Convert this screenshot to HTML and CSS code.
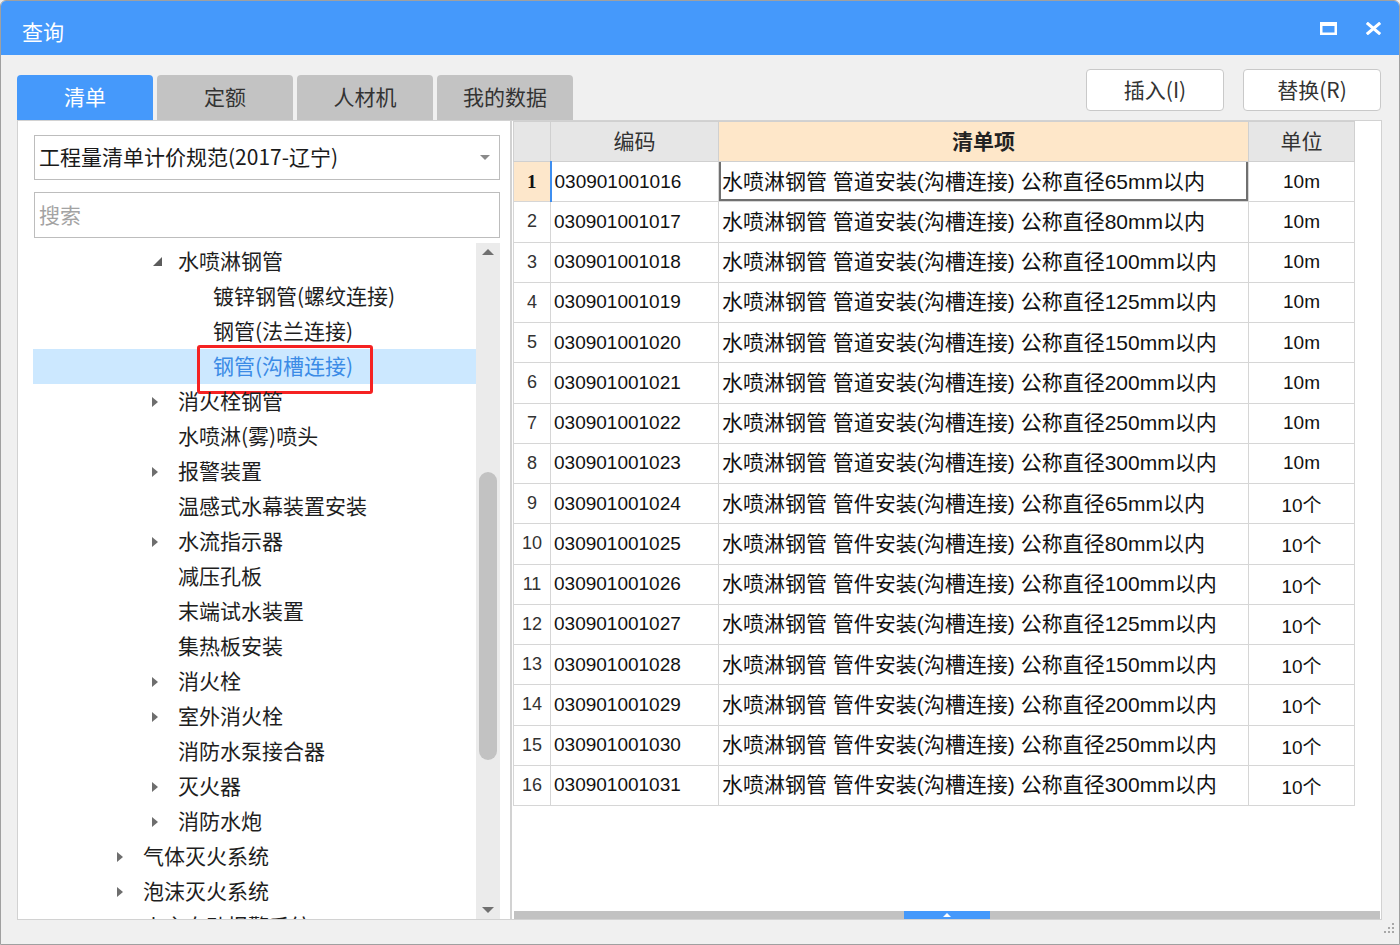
FILE: index.html
```html
<!DOCTYPE html>
<html lang="zh-CN">
<head>
<meta charset="utf-8">
<title>查询</title>
<link rel="stylesheet" href="styles.css">
</head>
<body>
<div class="window">
  <div class="titlebar">
    <div class="title">查询</div>
    <div class="win-btns">
      <svg class="ico" width="17" height="13" viewBox="0 0 17 13"><rect x="1.25" y="2" width="14.5" height="9.75" fill="none" stroke="#fff" stroke-width="2.5"/><rect x="0" y="0" width="17" height="4" fill="#fff"/></svg>
      <svg class="ico" width="17" height="13" viewBox="0 0 17 13"><path d="M1.8 0.8 L15.2 12.2 M15.2 0.8 L1.8 12.2" stroke="#fff" stroke-width="3" fill="none"/></svg>
    </div>
  </div>

  <div class="toolbar">
    <div class="tabs">
      <div class="tab active">清单</div>
      <div class="tab">定额</div>
      <div class="tab">人材机</div>
      <div class="tab">我的数据</div>
    </div>
    <div class="actions">
      <button class="btn">插入(I)</button>
      <button class="btn">替换(R)</button>
    </div>
  </div>

  <div class="main">
    <div class="left">
      <div class="select">
        <span>工程量清单计价规范(2017-辽宁)</span>
        <span class="caret"></span>
      </div>
      <div class="search">搜索</div>
      <div class="tree-area">
        <div class="tree">
          <div class="node l3"><span class="arr open"></span><span class="lbl">水喷淋钢管</span></div>
          <div class="node l4"><span class="arr none"></span><span class="lbl">镀锌钢管(螺纹连接)</span></div>
          <div class="node l4"><span class="arr none"></span><span class="lbl">钢管(法兰连接)</span></div>
          <div class="node l4 selected"><span class="arr none"></span><span class="lbl hl">钢管(沟槽连接)</span></div>
          <div class="node l3"><span class="arr closed"></span><span class="lbl">消火栓钢管</span></div>
          <div class="node l3"><span class="arr none"></span><span class="lbl">水喷淋(雾)喷头</span></div>
          <div class="node l3"><span class="arr closed"></span><span class="lbl">报警装置</span></div>
          <div class="node l3"><span class="arr none"></span><span class="lbl">温感式水幕装置安装</span></div>
          <div class="node l3"><span class="arr closed"></span><span class="lbl">水流指示器</span></div>
          <div class="node l3"><span class="arr none"></span><span class="lbl">减压孔板</span></div>
          <div class="node l3"><span class="arr none"></span><span class="lbl">末端试水装置</span></div>
          <div class="node l3"><span class="arr none"></span><span class="lbl">集热板安装</span></div>
          <div class="node l3"><span class="arr closed"></span><span class="lbl">消火栓</span></div>
          <div class="node l3"><span class="arr closed"></span><span class="lbl">室外消火栓</span></div>
          <div class="node l3"><span class="arr none"></span><span class="lbl">消防水泵接合器</span></div>
          <div class="node l3"><span class="arr closed"></span><span class="lbl">灭火器</span></div>
          <div class="node l3"><span class="arr closed"></span><span class="lbl">消防水炮</span></div>
          <div class="node l2"><span class="arr closed"></span><span class="lbl">气体灭火系统</span></div>
          <div class="node l2"><span class="arr closed"></span><span class="lbl">泡沫灭火系统</span></div>
          <div class="node l2"><span class="arr closed"></span><span class="lbl">火灾自动报警系统</span></div>
        </div>
        <div class="vscroll">
          <span class="up"></span>
          <span class="thumb"></span>
          <span class="down"></span>
        </div>
      </div>
    </div>

    <div class="right">
      <div class="grid-wrap">
        <table class="grid">
          <colgroup><col class="c-num"><col class="c-code"><col class="c-item"><col class="c-unit"></colgroup>
          <thead>
            <tr><th></th><th>编码</th><th class="hot">清单项</th><th>单位</th></tr>
          </thead>
          <tbody>
            <tr class="cur"><td class="num">1</td><td class="code">030901001016</td><td class="item sel">水喷淋钢管 管道安装(沟槽连接) 公称直径65mm以内</td><td class="unit">10m</td></tr>
            <tr><td class="num">2</td><td class="code">030901001017</td><td class="item">水喷淋钢管 管道安装(沟槽连接) 公称直径80mm以内</td><td class="unit">10m</td></tr>
            <tr><td class="num">3</td><td class="code">030901001018</td><td class="item">水喷淋钢管 管道安装(沟槽连接) 公称直径100mm以内</td><td class="unit">10m</td></tr>
            <tr><td class="num">4</td><td class="code">030901001019</td><td class="item">水喷淋钢管 管道安装(沟槽连接) 公称直径125mm以内</td><td class="unit">10m</td></tr>
            <tr><td class="num">5</td><td class="code">030901001020</td><td class="item">水喷淋钢管 管道安装(沟槽连接) 公称直径150mm以内</td><td class="unit">10m</td></tr>
            <tr><td class="num">6</td><td class="code">030901001021</td><td class="item">水喷淋钢管 管道安装(沟槽连接) 公称直径200mm以内</td><td class="unit">10m</td></tr>
            <tr><td class="num">7</td><td class="code">030901001022</td><td class="item">水喷淋钢管 管道安装(沟槽连接) 公称直径250mm以内</td><td class="unit">10m</td></tr>
            <tr><td class="num">8</td><td class="code">030901001023</td><td class="item">水喷淋钢管 管道安装(沟槽连接) 公称直径300mm以内</td><td class="unit">10m</td></tr>
            <tr><td class="num">9</td><td class="code">030901001024</td><td class="item">水喷淋钢管 管件安装(沟槽连接) 公称直径65mm以内</td><td class="unit">10个</td></tr>
            <tr><td class="num">10</td><td class="code">030901001025</td><td class="item">水喷淋钢管 管件安装(沟槽连接) 公称直径80mm以内</td><td class="unit">10个</td></tr>
            <tr><td class="num">11</td><td class="code">030901001026</td><td class="item">水喷淋钢管 管件安装(沟槽连接) 公称直径100mm以内</td><td class="unit">10个</td></tr>
            <tr><td class="num">12</td><td class="code">030901001027</td><td class="item">水喷淋钢管 管件安装(沟槽连接) 公称直径125mm以内</td><td class="unit">10个</td></tr>
            <tr><td class="num">13</td><td class="code">030901001028</td><td class="item">水喷淋钢管 管件安装(沟槽连接) 公称直径150mm以内</td><td class="unit">10个</td></tr>
            <tr><td class="num">14</td><td class="code">030901001029</td><td class="item">水喷淋钢管 管件安装(沟槽连接) 公称直径200mm以内</td><td class="unit">10个</td></tr>
            <tr><td class="num">15</td><td class="code">030901001030</td><td class="item">水喷淋钢管 管件安装(沟槽连接) 公称直径250mm以内</td><td class="unit">10个</td></tr>
            <tr><td class="num">16</td><td class="code">030901001031</td><td class="item">水喷淋钢管 管件安装(沟槽连接) 公称直径300mm以内</td><td class="unit">10个</td></tr>
          </tbody>
        </table>
      </div>
      <div class="hscroll"><span class="hthumb"></span></div>
    </div>
  </div>

  <div class="statusbar">
    <svg class="grip" width="14" height="14" viewBox="0 0 14 14">
      <rect x="11" y="1" width="2" height="2" fill="#a8a8a8"/>
      <rect x="7" y="5" width="2" height="2" fill="#a8a8a8"/>
      <rect x="11" y="5" width="2" height="2" fill="#a8a8a8"/>
      <rect x="3" y="9" width="2" height="2" fill="#a8a8a8"/>
      <rect x="7" y="9" width="2" height="2" fill="#a8a8a8"/>
      <rect x="11" y="9" width="2" height="2" fill="#a8a8a8"/>
    </svg>
  </div>
</div>
</body>
</html>
```

FILE: styles.css
```css
* { box-sizing: border-box; }
html, body { margin: 0; padding: 0; }
body {
  width: 1400px;
  height: 945px;
  overflow: hidden;
  background: #f0f0f0;
  font-family: "Noto Sans CJK SC", "Liberation Sans", sans-serif;
  color: #222;
}

.window {
  width: 1400px;
  height: 945px;
  border: 1px solid #a0a0a0;
  border-radius: 6px 6px 0 0;
  display: flex;
  flex-direction: column;
  background: #f0f0f0;
  overflow: hidden;
}

/* title bar */
.titlebar {
  height: 54px;
  flex: none;
  background: #4599fb;
  display: flex;
  align-items: flex-start;
  padding: 0 17px 0 21px;
}
.title {
  color: #fff;
  font-size: 21px;
  line-height: 28px;
  margin-top: 16px;
}
.win-btns {
  margin-left: auto;
  margin-top: 21px;
  display: flex;
  gap: 28px;
}
.ico { display: block; }

/* toolbar with tabs & buttons */
.toolbar {
  height: 65px;
  flex: none;
  display: flex;
  padding: 0 18px 0 16px;
}
.tabs {
  display: flex;
  gap: 4px;
  align-self: flex-end;
}
.tab {
  width: 136px;
  height: 45px;
  border-radius: 4px 4px 0 0;
  background: #c3c3c3;
  color: #333;
  font-size: 21px;
  display: flex;
  align-items: center;
  justify-content: center;
  padding-bottom: 3px;
}
.tab.active {
  background: #4599fb;
  color: #fff;
}
.actions {
  margin-left: auto;
  margin-top: 14px;
  display: flex;
  gap: 19px;
  align-self: flex-start;
}
.btn {
  width: 138px;
  height: 42px;
  background: #fff;
  border: 1px solid #c9c9c9;
  border-radius: 4px;
  font-family: "Noto Sans CJK SC", "Liberation Sans", sans-serif;
  font-size: 21px;
  color: #333;
  padding: 0 0 3px 0;
}

/* main */
.main {
  height: 800px;
  flex: none;
  display: flex;
  padding: 0 17px 0 16px;
}
.left {
  width: 494px;
  flex: none;
  background: #fff;
  border: 1px solid #d2d2d2;
  padding: 14px 10px 0 16px;
  display: flex;
  flex-direction: column;
}
.select {
  height: 45px;
  flex: none;
  border: 1px solid #bdbdbd;
  display: flex;
  align-items: center;
  padding: 0 9px 3px 4px;
  font-size: 21px;
  color: #1a1a1a;
}
.caret {
  margin-left: auto;
  margin-top: 3px;
  width: 0;
  height: 0;
  border-left: 5px solid transparent;
  border-right: 5px solid transparent;
  border-top: 5px solid #8a8a8a;
}
.search {
  height: 46px;
  flex: none;
  margin-top: 12px;
  border: 1px solid #bdbdbd;
  display: flex;
  align-items: center;
  padding: 0 0 2px 4px;
  font-size: 21px;
  color: #a3a3a3;
}
.tree-area {
  flex: 1;
  margin-top: 5px;
  display: flex;
  min-height: 0;
}
.tree {
  flex: 1;
  margin-left: -1px;
  padding-top: 1px;
  overflow: hidden;
}
.node {
  height: 35px;
  display: flex;
  align-items: center;
  white-space: nowrap;
}
.node.l2 { padding-left: 83px; }
.node.l3 { padding-left: 118px; }
.node.l4 { padding-left: 153px; }
.arr {
  width: 27px;
  flex: none;
  height: 10px;
  position: relative;
}
.arr.closed::before {
  content: "";
  position: absolute;
  left: 1px;
  top: 0;
  border-left: 6px solid #6e6e6e;
  border-top: 5px solid transparent;
  border-bottom: 5px solid transparent;
}
.arr.open::before {
  content: "";
  position: absolute;
  left: 2px;
  top: 0;
  border-right: 9px solid #5c5c5c;
  border-top: 9px solid transparent;
}
.lbl {
  font-size: 21px;
  line-height: 35px;
  color: #1e1e1e;
  position: relative;
  top: -1px;
}
.node.selected { background: #cce8ff; }
.node.selected .lbl { color: #3b8be6; }
.hl::after {
  content: "";
  position: absolute;
  left: -16px;
  right: -20px;
  top: -3px;
  bottom: -11px;
  border: 3px solid #f52222;
  border-radius: 3px;
}

.vscroll {
  width: 24px;
  flex: none;
  background: #ebebeb;
  position: relative;
}
.vscroll .up, .vscroll .down {
  position: absolute;
  left: 6px;
  width: 0;
  height: 0;
  border-left: 6px solid transparent;
  border-right: 6px solid transparent;
}
.vscroll .up { top: 6px; border-bottom: 6px solid #707070; }
.vscroll .down { bottom: 6px; border-top: 6px solid #707070; }
.vscroll .thumb {
  position: absolute;
  left: 3px;
  width: 18px;
  top: 229px;
  height: 288px;
  background: #c2c2c2;
  border-radius: 9px;
}

/* right panel */
.right {
  flex: 1;
  background: #fff;
  border: 1px solid #d2d2d2;
  display: flex;
  flex-direction: column;
  padding: 0 0 0 1px;
}
.grid-wrap {
  flex: 1;
  overflow: hidden;
}
.grid {
  border-collapse: collapse;
  table-layout: fixed;
  width: 841px;
}
.c-num { width: 37px; }
.c-code { width: 168px; }
.c-item { width: 530px; }
.c-unit { width: 106px; }
.grid th, .grid td {
  border: 1px solid #d6d6d6;
  padding: 0;
  white-space: nowrap;
  overflow: hidden;
}
.grid th {
  height: 40px;
  background: #e6e6e6;
  font-weight: normal;
  font-size: 21px;
  color: #333;
  text-align: center;
  border-color: #d0d0d0;
  padding-bottom: 3px;
}
.grid th.hot {
  background: #fee7c9;
  font-weight: bold;
  color: #222;
}
.grid td {
  height: 40.25px;
  color: #111;
}
.grid td.num {
  text-align: center;
  font-family: "Liberation Sans", sans-serif;
  font-size: 18px;
  color: #333;
}
.grid tr.cur td.num {
  background: #fde7cb;
  font-family: "Liberation Serif", serif;
  font-weight: bold;
  font-size: 19px;
  color: #111;
  border-right: 2px solid #3d8ef0;
}
.grid td.code {
  font-family: "Liberation Sans", sans-serif;
  font-size: 19px;
  padding-left: 3px;
}
.grid td.item {
  font-family: "Liberation Sans", "Noto Sans CJK SC", sans-serif;
  font-size: 21px;
  padding: 0 0 4px 3px;
}
.grid td.item.sel {
  box-shadow: inset 2px 0 0 #707070, inset -2px 0 0 #707070, inset 0 -2px 0 #707070;
  border-top: 1px solid #7fb6f2;
}
.grid td.unit {
  text-align: center;
  font-family: "Liberation Sans", "Noto Sans CJK SC", sans-serif;
  font-size: 19px;
}

.hscroll {
  height: 8px;
  flex: none;
  margin: 0 1px 0 1px;
  background: #c2c2c2;
  position: relative;
}
.hthumb {
  position: absolute;
  left: 390px;
  width: 86px;
  top: 0;
  bottom: 0;
  background: #4599fb;
}
.hthumb::after {
  content: "";
  position: absolute;
  left: 39px;
  top: 2px;
  border-left: 4px solid transparent;
  border-right: 4px solid transparent;
  border-bottom: 4px solid #fff;
}

.statusbar {
  flex: 1;
  display: flex;
  justify-content: flex-end;
  align-items: flex-start;
  padding: 2px 4px 0 0;
}
.grip { display: block; }
```
